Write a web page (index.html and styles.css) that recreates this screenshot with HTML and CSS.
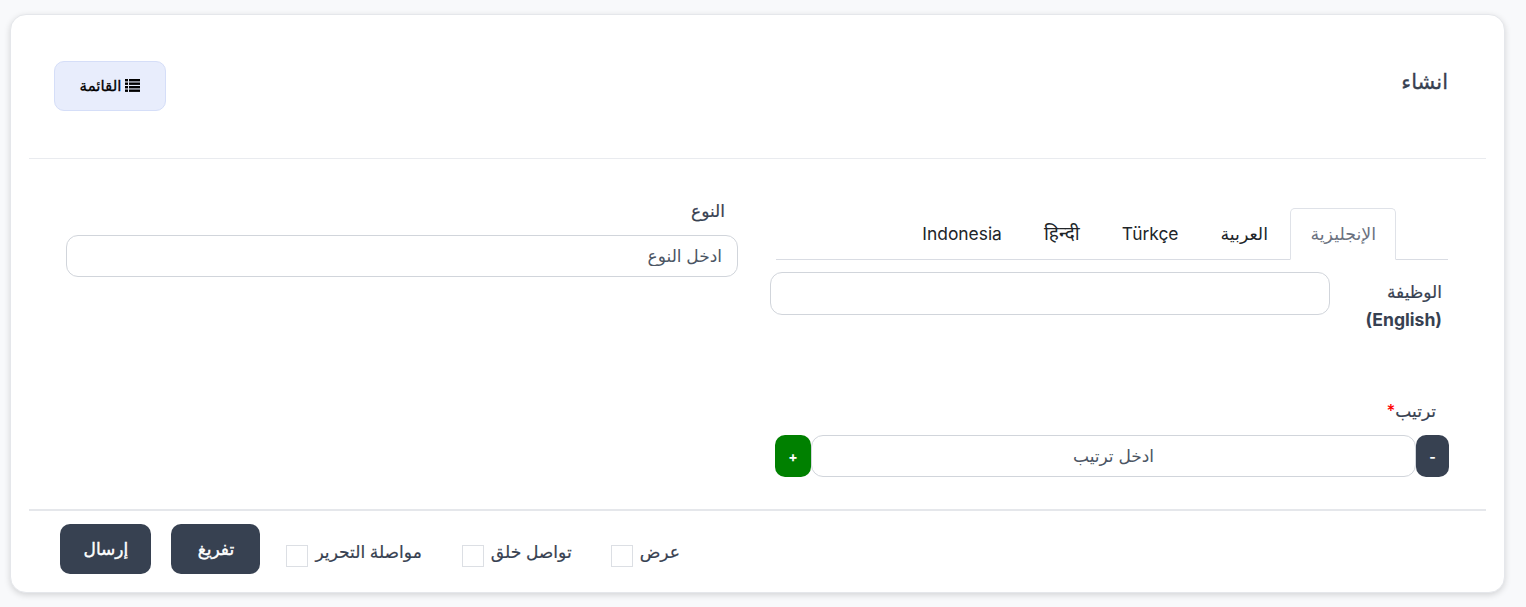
FILE: index.html
```html
<!DOCTYPE html>
<html lang="ar" dir="rtl">

<head>
    <meta charset="UTF-8">
    <meta name="viewport" content="width=device-width, initial-scale=1.0">
    <title>انشاء</title>
    <link rel="stylesheet" href="styles.css">
</head>

<body>
    <div class="card">
        <div class="card-header">
            <h3>انشاء</h3>
            <a class="list-button" href="#">
                <svg class="list-icon" width="15" height="13" viewBox="0 0 15 13" fill="#000">
                    <rect x="0" y="0" width="3" height="2.4"/>
                    <rect x="4" y="0" width="11" height="2.4"/>
                    <rect x="0" y="3.5" width="3" height="2.4"/>
                    <rect x="4" y="3.5" width="11" height="2.4"/>
                    <rect x="0" y="7" width="3" height="2.4"/>
                    <rect x="4" y="7" width="11" height="2.4"/>
                    <rect x="0" y="10.5" width="3" height="2.4"/>
                    <rect x="4" y="10.5" width="11" height="2.4"/>
                </svg>
                القائمة
            </a>
        </div>

        <form class="card-body">
            <div class="column column-main">
                <ul class="tabs">
                    <li class="tab active">الإنجليزية</li>
                    <li class="tab">العربية</li>
                    <li class="tab">Türkçe</li>
                    <li class="tab tab-hindi">हिन्दी</li>
                    <li class="tab">Indonesia</li>
                </ul>
                <div class="job-row">
                    <label class="field-label job-label">الوظيفة <strong>(English)</strong></label>
                    <input type="text" class="text-input job-input">
                </div>
                <label class="field-label order-label">ترتيب<span class="required">*</span></label>
                <div class="stepper">
                    <button type="button" class="step-button minus">-</button>
                    <input type="text" class="text-input order-input" placeholder="ادخل ترتيب">
                    <button type="button" class="step-button plus">+</button>
                </div>
            </div>
            <div class="column column-side">
                <label class="field-label type-label">النوع</label>
                <input type="text" class="text-input" placeholder="ادخل النوع">
            </div>
        </form>

        <div class="card-footer">
            <label class="check check-show"><span>عرض</span><input type="checkbox"></label>
            <label class="check check-create"><span>تواصل خلق</span><input type="checkbox"></label>
            <label class="check check-edit"><span>مواصلة التحرير</span><input type="checkbox"></label>
            <button type="reset" class="action-button reset-button">تفريغ</button>
            <button type="submit" class="action-button submit-button">إرسال</button>
        </div>
    </div>
</body>

</html>
```

FILE: styles.css
```css
* {
    margin: 0;
    padding: 0;
    box-sizing: border-box;
}

body {
    background-color: #f8f9fb;
    font-family: 'Inter', 'Noto Sans', 'DejaVu Sans', sans-serif;
    color: #374151;
    overflow: hidden;
    padding: 14px 21px 14px 10px;
}

.card {
    height: 579px;
    padding: 0 18px;
    background: white;
    border: 1px solid #e5e7eb;
    border-radius: 16px;
    box-shadow: 0 2px 6px rgba(0, 0, 0, 0.15);
}

.card-header {
    height: 144px;
    display: flex;
    justify-content: space-between;
    align-items: center;
    padding: 0 38px 2px 25px;
    border-bottom: 1px solid #e9ebef;
}

.card-header h3 {
    margin-bottom: 8px;
    font-size: 21px;
    font-weight: 500;
    -webkit-text-stroke: 0.3px #374151;
    color: #374151;
}

.list-button {
    width: 112px;
    height: 50px;
    display: flex;
    justify-content: center;
    align-items: center;
    gap: 4px;
    background-color: #e8edfc;
    border: 1px solid #d5def8;
    border-radius: 10px;
    color: #000;
    font-size: 15px;
    font-weight: 500;
    -webkit-text-stroke: 0.3px #000;
    text-decoration: none;
}

.card-body {
    height: 352px;
    display: grid;
    grid-template-columns: 672px 672px;
    gap: 38px;
    padding: 0 38px 0 37px;
    border-bottom: 2px solid #e5e7eb;
}

.column {
    padding-top: 49px;
}

.tabs {
    display: flex;
    list-style: none;
    height: 52px;
    padding-right: 52px;
    border-bottom: 1px solid #d9dce3;
}

.tab {
    height: 52px;
    padding: 0 19px;
    margin-left: 2px;
    line-height: 50px;
    font-size: 17.4px;
    color: #212529;
    border: 1px solid transparent;
}

.tab-hindi {
    font-size: 19px;
}

.tab.active {
    width: 106px;
    color: #6b7280;
    background: white;
    border-color: #dfe2e8;
    border-bottom-color: white;
    border-radius: 5px 5px 0 0;
}

.field-label {
    font-size: 17px;
    font-weight: 500;
    -webkit-text-stroke: 0.2px #374151;
}

.field-label strong {
    font-size: 17.6px;
    font-weight: 700;
    -webkit-text-stroke: 0;
}

.job-row {
    display: flex;
    margin-top: 12px;
    height: 127px;
}

.job-label {
    width: 82px;
    margin-right: 6px;
    margin-left: 30px;
    padding-top: 6px;
    line-height: 28px;
}

.text-input {
    width: 100%;
    height: 42px;
    padding: 0 15px;
    background: white;
    border: 1px solid #d1d5db;
    border-radius: 12px;
    font-family: inherit;
    font-size: 17px;
    outline: none;
}

.text-input::placeholder {
    color: #4b5563;
}

.job-input {
    width: 560px;
    height: 43px;
    margin-left: -6px;
}

.order-label {
    display: block;
    padding-right: 12px;
    line-height: 24px;
}

.required {
    color: red;
    -webkit-text-stroke: 0;
}

.stepper {
    display: flex;
    margin-top: 12px;
    margin-right: -1px;
}

.step-button {
    flex-shrink: 0;
    height: 42px;
    border: none;
    border-radius: 10px;
    color: white;
    font-family: inherit;
    font-size: 14px;
    font-weight: 700;
}

.minus {
    width: 33px;
    background-color: #374151;
}

.plus {
    width: 36px;
    background-color: green;
}

.order-input {
    width: 605px;
    flex-shrink: 0;
    text-align: center;
}

.type-label {
    display: block;
    margin-top: -9px;
    margin-bottom: 12px;
    padding-right: 13px;
    line-height: 24px;
}

.card-footer {
    display: flex;
    align-items: flex-start;
    height: 64px;
    padding-top: 13px;
    padding-right: 806px;
}

.check {
    display: flex;
    align-items: center;
    gap: 7px;
    height: 50px;
    font-size: 17.1px;
    font-weight: 500;
    -webkit-text-stroke: 0.2px #374151;
}

.check input {
    appearance: none;
    width: 22px;
    height: 22px;
    margin-top: 14px;
    background: white;
    border: 1px solid #dcdfe4;
}

.check span {
    margin-top: 5px;
}

.check-show {
    margin-left: 39px;
}

.check-create {
    margin-left: 40px;
}

.check-edit {
    margin-left: 26px;
}

.action-button {
    height: 50px;
    background-color: #374151;
    border: none;
    border-radius: 10px;
    color: white;
    font-family: inherit;
    font-size: 17px;
    font-weight: 500;
    -webkit-text-stroke: 0.4px white;
}

.reset-button {
    width: 89px;
}

.submit-button {
    width: 91px;
    margin-right: 20px;
}
```
